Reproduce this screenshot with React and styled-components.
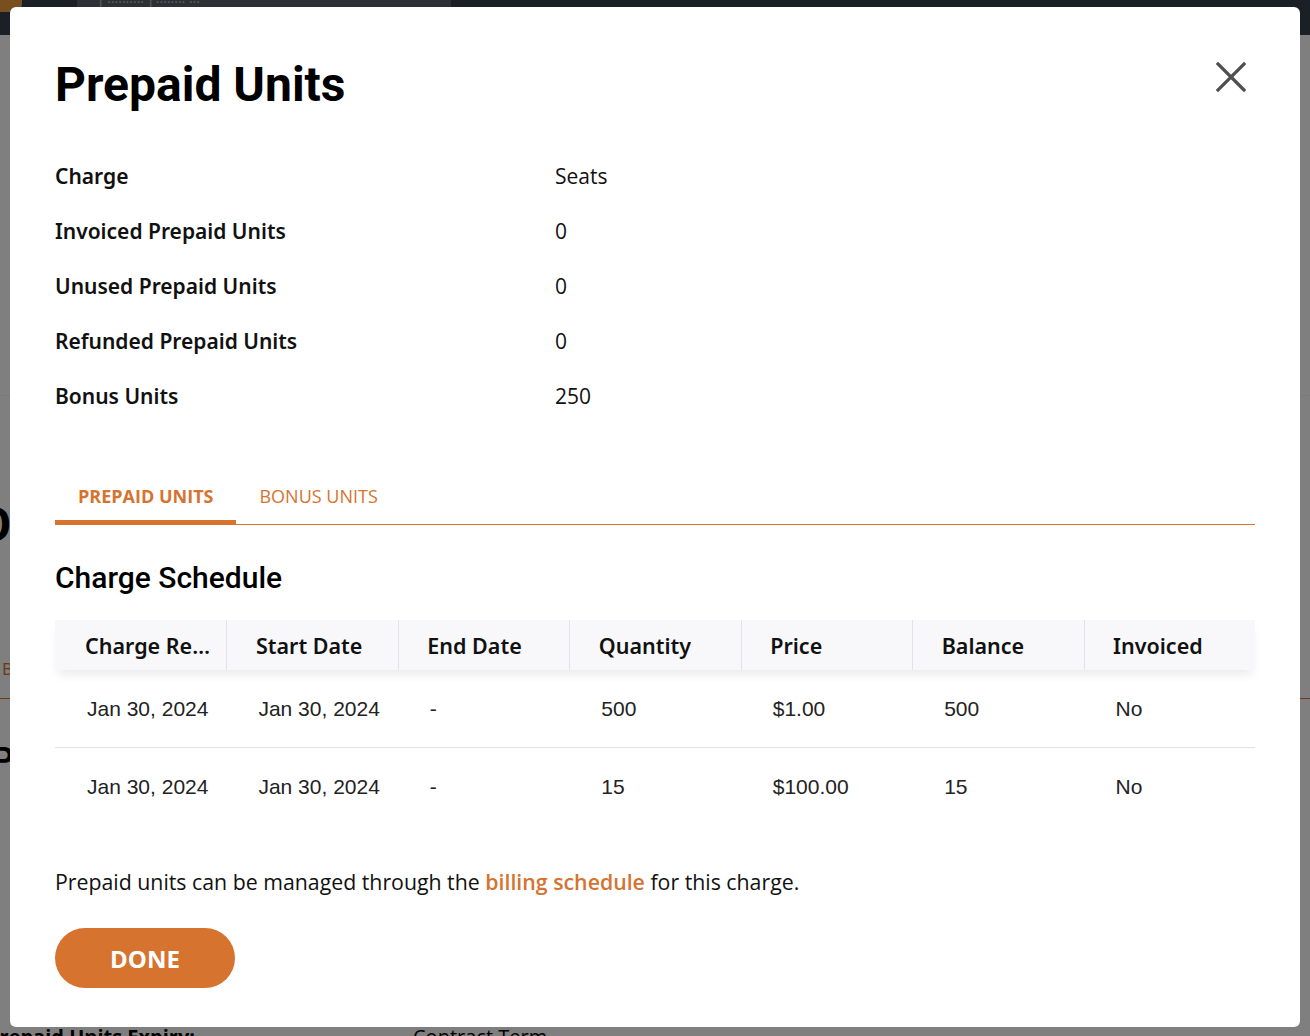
import React from "react";
import styled, { createGlobalStyle } from "styled-components";

const ORANGE = "#d6732f";

const GlobalStyle = createGlobalStyle`
  html, body {
    margin: 0;
    padding: 0;
    height: 100%;
    overflow: hidden;
    background: #ffffff;
    font-family: "Open Sans", "Noto Sans", sans-serif;
  }
  * {
    box-sizing: border-box;
  }
`;

const details = [
  ["Charge", "Seats"],
  ["Invoiced Prepaid Units", "0"],
  ["Unused Prepaid Units", "0"],
  ["Refunded Prepaid Units", "0"],
  ["Bonus Units", "250"],
];

const columns = [
  "Charge Reference",
  "Start Date",
  "End Date",
  "Quantity",
  "Price",
  "Balance",
  "Invoiced",
];

const rows = [
  ["Jan 30, 2024", "Jan 30, 2024", "-", "500", "$1.00", "500", "No"],
  ["Jan 30, 2024", "Jan 30, 2024", "-", "15", "$100.00", "15", "No"],
];

function CloseIcon() {
  return (
    <svg width="30" height="30" viewBox="0 0 30 30" fill="none">
      <path
        d="M2 2 L28 28 M28 2 L2 28"
        stroke="#4f4f4f"
        strokeWidth="3.2"
        strokeLinecap="square"
      />
    </svg>
  );
}

function App() {
  return (
    <>
      <GlobalStyle />
      <Page>
        <TopNav>
          <NavLogo />
          <NavTab>[ ·········· ] ········ ···</NavTab>
        </TopNav>
        <PageBody>
          <GhostSection>
            <GhostTitle>Overview</GhostTitle>
            <GhostTabs>
              <GhostTab>BONUS UNITS</GhostTab>
            </GhostTabs>
            <GhostHeading>Prepaid Units</GhostHeading>
          </GhostSection>
          <GhostRow>
            <GhostLabel>Prepaid Units Expiry:</GhostLabel>
            <GhostValue>Contract Term</GhostValue>
          </GhostRow>
        </PageBody>
        <Overlay />
      </Page>

      <Modal role="dialog" aria-label="Prepaid Units">
        <ModalHeader>
          <Title>Prepaid Units</Title>
          <CloseButton aria-label="Close">
            <CloseIcon />
          </CloseButton>
        </ModalHeader>

        <DetailGrid>
          {details.map(([label, value]) => (
            <React.Fragment key={label}>
              <DetailLabel>{label}</DetailLabel>
              <DetailValue>{value}</DetailValue>
            </React.Fragment>
          ))}
        </DetailGrid>

        <TabList>
          <Tab $active>Prepaid Units</Tab>
          <Tab>Bonus Units</Tab>
        </TabList>

        <SectionTitle>Charge Schedule</SectionTitle>

        <Table role="table">
          <HeadRow role="row">
            {columns.map((c, i) => (
              <HeadCell key={c} role="columnheader" $first={i === 0}>
                <HeadText>{c}</HeadText>
              </HeadCell>
            ))}
          </HeadRow>
          {rows.map((r, ri) => (
            <BodyRow key={ri} role="row" $last={ri === rows.length - 1}>
              {r.map((v, ci) => (
                <Cell key={ci} role="cell">
                  {v}
                </Cell>
              ))}
            </BodyRow>
          ))}
        </Table>

        <Note>
          Prepaid units can be managed through the{" "}
          <NoteLink href="#">billing schedule</NoteLink> for this charge.
        </Note>

        <DoneButton>Done</DoneButton>
      </Modal>
    </>
  );
}

const Page = styled.div`
  position: relative;
  height: 1036px;
  overflow: hidden;
`;

const TopNav = styled.div`
  height: 35px;
  background: #363f4d;
  display: flex;
  align-items: flex-start;
  gap: 55px;
`;

const NavLogo = styled.div`
  width: 22px;
  height: 12px;
  background: #f0a040;
  border-radius: 0 0 8px 0;
`;

const NavTab = styled.div`
  width: 374px;
  height: 8px;
  background: #5a626c;
  color: #b9bcc0;
  font-size: 14px;
  line-height: 4px;
  padding-left: 22px;
  overflow: hidden;
`;

const PageBody = styled.div`
  display: flex;
  flex-direction: column;
  justify-content: space-between;
  height: 1001px;
  padding-top: 360px;
`;

const GhostSection = styled.div`
  display: flex;
  flex-direction: column;
  border-top: 1px solid #f2f2f2;
  padding-top: 100px;
`;

const GhostTitle = styled.div`
  font-family: Roboto, sans-serif;
  font-weight: 700;
  font-size: 48px;
  margin-left: -22px;
  color: #000;
`;

const GhostTabs = styled.div`
  margin-top: 104px;
  border-bottom: 1px solid ${ORANGE};
  display: flex;
  padding-bottom: 18px;
`;

const GhostTab = styled.div`
  color: ${ORANGE};
  font-size: 17px;
  margin-left: 2px;
`;

const GhostHeading = styled.div`
  font-family: Roboto, sans-serif;
  font-weight: 700;
  font-size: 34px;
  margin-top: 40px;
  margin-left: -8px;
  color: #000;
`;

const GhostRow = styled.div`
  display: grid;
  grid-template-columns: 426px 1fr;
  margin-left: -13px;
  margin-bottom: -14px;
  font-size: 20px;
  color: #000;
`;

const GhostLabel = styled.div`
  font-weight: 700;
`;

const GhostValue = styled.div``;

const Overlay = styled.div`
  position: absolute;
  inset: 0;
  background: rgba(0, 0, 0, 0.5);
`;

const Modal = styled.div`
  position: fixed;
  top: 7px;
  left: 10px;
  width: 1290px;
  height: 1020px;
  background: #ffffff;
  border-radius: 6px;
  padding: 50px 45px 37px;
  display: flex;
  flex-direction: column;
  color: #111;

  & > * {
    flex-shrink: 0;
  }
`;

const ModalHeader = styled.div`
  display: flex;
  justify-content: space-between;
  align-items: flex-start;
`;

const Title = styled.h1`
  margin: 0;
  font-family: Roboto, sans-serif;
  font-weight: 700;
  font-size: 48px;
  line-height: 56px;
  color: #000;
`;

const CloseButton = styled.button`
  width: 36px;
  height: 36px;
  margin-top: 2px;
  margin-right: 6px;
  padding: 0;
  border: none;
  background: transparent;
  display: flex;
  align-items: center;
  justify-content: center;
  cursor: pointer;
`;

const DetailGrid = styled.div`
  margin-top: 35px;
  display: grid;
  grid-template-columns: 500px 1fr;
  grid-auto-rows: 55px;
  align-items: center;
`;

const DetailLabel = styled.div`
  font-family: "Noto Sans", sans-serif;
  font-weight: 600;
  font-size: 21px;
  color: #111;
`;

const DetailValue = styled.div`
  font-family: "Open Sans", sans-serif;
  font-size: 21px;
  color: #111;
`;

const TabList = styled.div`
  margin-top: 50px;
  display: flex;
  border-bottom: 1px solid ${ORANGE};
`;

const Tab = styled.button`
  border: none;
  background: transparent;
  padding: 13px 23px 14px;
  border-bottom: 4px solid ${(p) => (p.$active ? ORANGE : "transparent")};
  font-family: "Open Sans", sans-serif;
  font-size: 18px;
  line-height: 20px;
  font-weight: ${(p) => (p.$active ? 700 : 400)};
  text-transform: uppercase;
  color: ${ORANGE};
  cursor: pointer;
`;

const SectionTitle = styled.h2`
  margin: 35px 0 0;
  font-family: Roboto, sans-serif;
  font-weight: 500;
  font-size: 30px;
  line-height: 36px;
  color: #000;
`;

const Table = styled.div`
  margin-top: 24px;
  display: flex;
  flex-direction: column;
`;

const HeadRow = styled.div`
  display: grid;
  grid-template-columns: repeat(7, 1fr);
  height: 50px;
  background: #f8f8fb;
  box-shadow: 0 7px 10px -3px rgba(0, 0, 0, 0.09);
  position: relative;
  z-index: 1;
`;

const HeadCell = styled.div`
  display: flex;
  align-items: center;
  min-width: 0;
  padding: 0 10px 0 ${(p) => (p.$first ? "30px" : "28.5px")};
  border-left: ${(p) => (p.$first ? "none" : "1.5px solid #e2e2ea")};
  font-family: "Noto Sans", sans-serif;
  font-weight: 600;
  font-size: 21.5px;
  color: #111;
`;

const HeadText = styled.div`
  white-space: nowrap;
  overflow: hidden;
  text-overflow: ellipsis;
`;

const BodyRow = styled.div`
  display: grid;
  grid-template-columns: repeat(7, 1fr);
  height: 78px;
  align-items: center;
  border-bottom: ${(p) => (p.$last ? "none" : "1px solid #e2e2e2")};
`;

const Cell = styled.div`
  padding: 0 10px 0 32px;
  font-family: "Liberation Sans", Arial, sans-serif;
  font-size: 21px;
  color: #222;
  white-space: nowrap;
`;

const Note = styled.p`
  margin: 42px 0 0;
  font-family: "Open Sans", sans-serif;
  font-size: 21.3px;
  line-height: 28px;
  color: #111;
`;

const NoteLink = styled.a`
  color: ${ORANGE};
  font-weight: 600;
  text-decoration: none;
`;

const DoneButton = styled.button`
  margin-top: 32px;
  width: 180px;
  height: 60px;
  border: none;
  border-radius: 30px;
  background: ${ORANGE};
  color: #fff;
  font-family: "Open Sans", sans-serif;
  font-weight: 700;
  font-size: 24px;
  text-transform: uppercase;
  cursor: pointer;
`;

export default App;
